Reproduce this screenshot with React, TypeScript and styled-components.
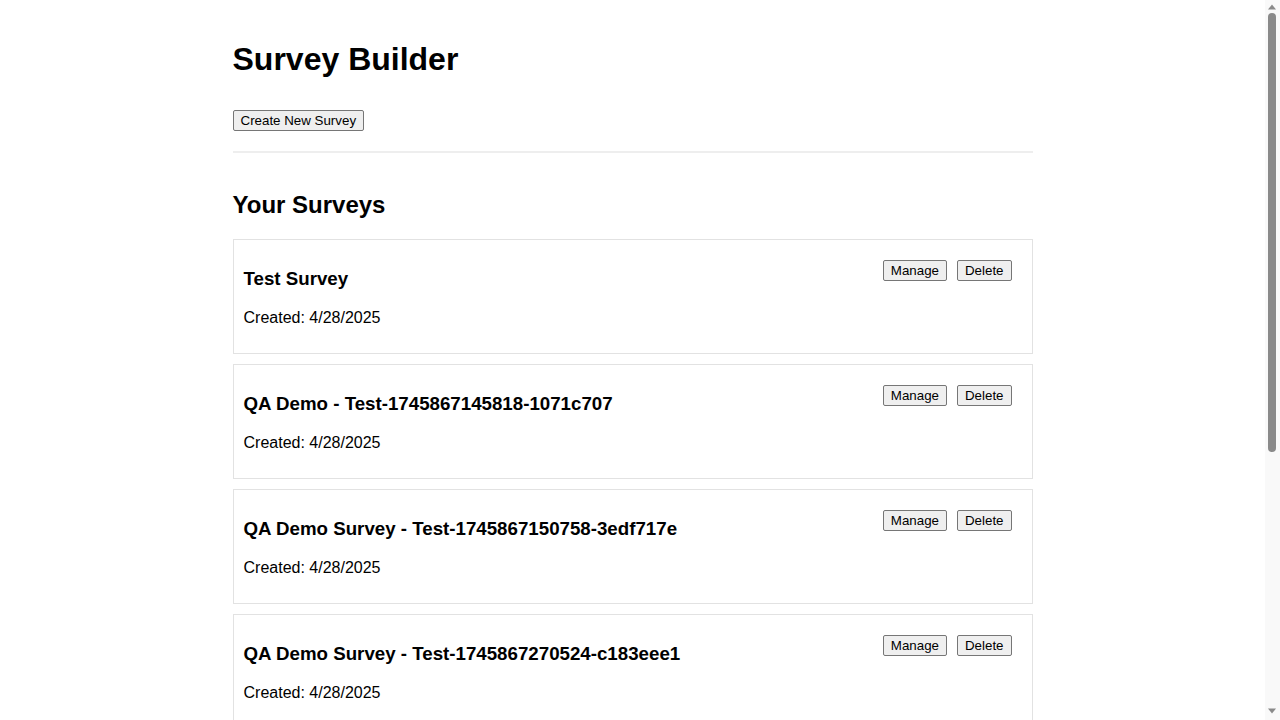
import React from "react";
import styled, { createGlobalStyle } from "styled-components";

const GlobalStyle = createGlobalStyle`
  html, body {
    margin: 0;
    padding: 0;
    background: #ffffff;
    color: #000000;
    font-family: "Liberation Sans", Arial, sans-serif;
    overflow: hidden;
  }
`;

const Shell = styled.div`
  display: flex;
  height: 100vh;
`;

const Main = styled.main`
  flex: 1;
  min-width: 0;
  overflow-y: auto;
  scrollbar-width: none;
  &::-webkit-scrollbar {
    display: none;
  }
`;

const Rail = styled.div`
  flex: none;
  width: 15px;
  display: flex;
  flex-direction: column;
  background: #f9f9f9;
`;

const RailArrow = styled.svg`
  display: block;
  flex: none;
  width: 15px;
`;

const RailThumb = styled.div<{ $height: number }>`
  flex: none;
  width: 8px;
  margin-left: 3px;
  height: ${(p) => p.$height}px;
  border-radius: 4px;
  background: #8a8a8a;
`;

const RailSpace = styled.div`
  flex: 1;
`;

const Page = styled.div`
  max-width: 800px;
  margin: 0 auto;
  padding: 20px;
`;

const Header = styled.header`
  padding-bottom: 20px;
  border-bottom: 2px solid #eeeeee;
  margin-bottom: 38px;
`;

const Title = styled.h1`
  font-size: 32px;
  font-weight: bold;
  margin: 21.44px 0 31.5px;
`;

const Button = styled.button`
  font-family: "Liberation Sans", Arial, sans-serif;
  font-size: 13.333px;
  line-height: 15px;
  color: #000000;
  background: #efefef;
  border: 1px solid #767676;
  border-radius: 2px;
  padding: 2px 7px;
  margin: 0;
  cursor: pointer;
`;

const SectionTitle = styled.h2`
  font-size: 24px;
  font-weight: bold;
  margin: 0 0 19.92px;
`;

const Card = styled.div`
  display: flex;
  justify-content: space-between;
  align-items: flex-start;
  border: 1px solid #e2e2e2;
  padding: 10px;
  margin-bottom: 10px;
`;

const CardInfo = styled.div`
  display: flex;
  flex-direction: column;
`;

const CardTitle = styled.h3`
  font-size: 18.72px;
  font-weight: bold;
  margin: 17.72px 0 19.39px;
`;

const CardMeta = styled.p`
  font-size: 16px;
  margin: 0 0 16px;
`;

const ButtonGroup = styled.div`
  display: flex;
  gap: 10px;
  padding: 10px 10px 0 0;
`;

const surveys = [
  "Test Survey",
  "QA Demo - Test-1745867145818-1071c707",
  "QA Demo Survey - Test-1745867150758-3edf717e",
  "QA Demo Survey - Test-1745867270524-c183eee1",
  "QA Demo Survey - Test-1745867318462-5a9b20d4",
  "QA Demo Survey - Test-1745867402117-8e1f6c3a",
  "QA Demo Survey - Test-1745867489953-b27d4e90",
];

export default function App() {
  return (
    <>
      <GlobalStyle />
      <Shell>
        <Main>
          <Page>
            <Header>
              <Title>Survey Builder</Title>
              <Button>Create New Survey</Button>
            </Header>
            <SectionTitle>Your Surveys</SectionTitle>
            {surveys.map((name) => (
              <Card key={name}>
                <CardInfo>
                  <CardTitle>{name}</CardTitle>
                  <CardMeta>Created: 4/28/2025</CardMeta>
                </CardInfo>
                <ButtonGroup>
                  <Button>Manage</Button>
                  <Button>Delete</Button>
                </ButtonGroup>
              </Card>
            ))}
          </Page>
        </Main>
        <Rail aria-hidden="true">
          <RailArrow height="13" viewBox="0 0 15 13">
            <polygon points="3,9.5 7,4.5 11,9.5" fill="#8a8a8a" />
          </RailArrow>
          <RailThumb $height={439} />
          <RailSpace />
          <RailArrow height="15" viewBox="0 0 15 15">
            <polygon points="3,3.5 11,3.5 7,8.5" fill="#8a8a8a" />
          </RailArrow>
        </Rail>
      </Shell>
    </>
  );
}
